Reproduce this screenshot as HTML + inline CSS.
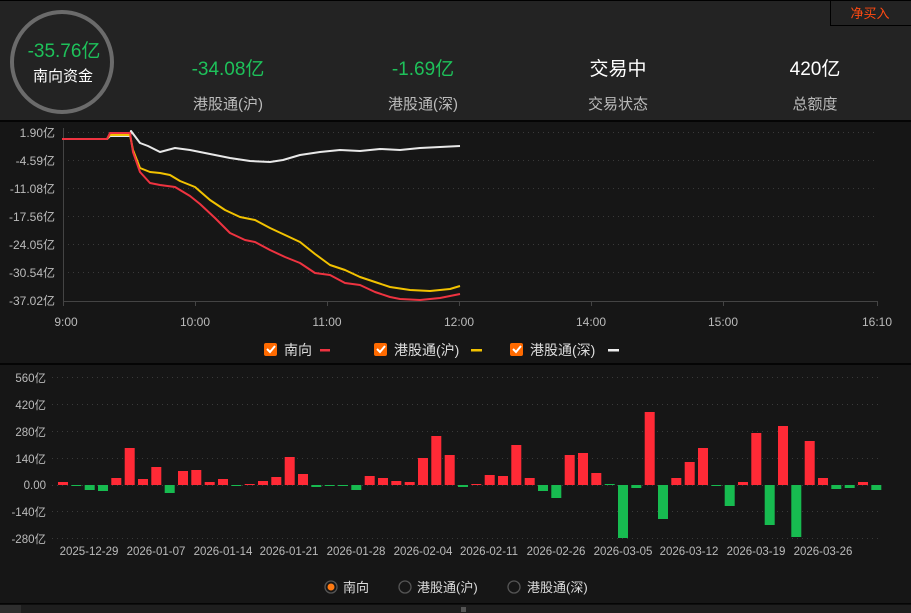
<!DOCTYPE html>
<html><head><meta charset="utf-8"><style>
html,body{margin:0;padding:0;background:#161616;}
svg{display:block;font-family:"Liberation Sans","Noto Sans CJK SC",sans-serif;}
</style></head><body>
<svg width="911" height="613" viewBox="0 0 911 613" xmlns="http://www.w3.org/2000/svg">
<rect x="0" y="0" width="911" height="613" fill="#161616"/>
<rect x="0" y="0" width="911" height="121" fill="#232323"/>
<rect x="0" y="0" width="911" height="1" fill="#000"/>
<rect x="0" y="120" width="911" height="2" fill="#050505"/>
<rect x="830.5" y="0.5" width="81" height="25" fill="#232323" stroke="#000"/>
<text x="870" y="18" fill="#ff4a12" font-size="13" text-anchor="middle">净买入</text>
<circle cx="62" cy="62" r="50" fill="none" stroke="#6b6b6b" stroke-width="4"/>
<text x="64" y="57" fill="#1ec15a" font-size="19" text-anchor="middle">-35.76亿</text>
<text x="63" y="81" fill="#fff" font-size="15" text-anchor="middle">南向资金</text>
<g text-anchor="middle">
<text x="228" y="75" fill="#1ec15a" font-size="19">-34.08亿</text>
<text x="228" y="109" fill="#bbb" font-size="15">港股通(沪)</text>
<text x="423" y="75" fill="#1ec15a" font-size="19">-1.69亿</text>
<text x="423" y="109" fill="#bbb" font-size="15">港股通(深)</text>
<text x="618" y="75" fill="#fff" font-size="19">交易中</text>
<text x="618" y="109" fill="#bbb" font-size="15">交易状态</text>
<text x="815" y="75" fill="#fff" font-size="19">420亿</text>
<text x="815" y="109" fill="#bbb" font-size="15">总额度</text>
</g>
<g stroke="#3a3a3a" stroke-dasharray="1 4" stroke-width="1">
<line x1="63" y1="132.5" x2="878" y2="132.5"/><line x1="63" y1="160.5" x2="878" y2="160.5"/>
<line x1="63" y1="188.5" x2="878" y2="188.5"/><line x1="63" y1="216.5" x2="878" y2="216.5"/>
<line x1="63" y1="244.5" x2="878" y2="244.5"/><line x1="63" y1="272.5" x2="878" y2="272.5"/>
</g>
<g stroke="#444" stroke-width="1">
<line x1="63.5" y1="128" x2="63.5" y2="301"/><line x1="63" y1="301.5" x2="878" y2="301.5"/>
<line x1="63.5" y1="301" x2="63.5" y2="306"/><line x1="195.5" y1="301" x2="195.5" y2="306"/>
<line x1="327.5" y1="301" x2="327.5" y2="306"/><line x1="459.5" y1="301" x2="459.5" y2="306"/>
<line x1="591.5" y1="301" x2="591.5" y2="306"/><line x1="723.5" y1="301" x2="723.5" y2="306"/>
<line x1="877.5" y1="301" x2="877.5" y2="306"/>
</g>
<g fill="#bbb" font-size="12" text-anchor="end">
<text x="55" y="137">1.90亿</text><text x="55" y="165">-4.59亿</text><text x="55" y="193">-11.08亿</text>
<text x="55" y="221">-17.56亿</text><text x="55" y="249">-24.05亿</text><text x="55" y="277">-30.54亿</text><text x="55" y="305">-37.02亿</text>
</g>
<g fill="#bbb" font-size="12" text-anchor="middle">
<text x="66" y="326">9:00</text><text x="195" y="326">10:00</text><text x="327" y="326">11:00</text>
<text x="459" y="326">12:00</text><text x="591" y="326">14:00</text><text x="723" y="326">15:00</text><text x="877" y="326">16:10</text>
</g>
<g fill="none" stroke-width="2" stroke-linejoin="round">
<polyline stroke="#e8e8e8" points="62,139 107,139 110,136 130,136 131,131 140,143 148,146 160,152 175,148 190,150 210,154 230,158 250,161 270,162 283,160 300,155 320,152 340,150 360,151 380,149 400,150 420,148 440,147 460,146"/>
<polyline stroke="#f2c200" points="62,139 107,139 110,135 130,135 133,150 140,168 150,172 160,173 170,175 180,181 195,187 210,200 225,210 240,217 255,220 270,228 285,235 300,242 315,254 330,265 345,270 360,277 375,282 390,287 410,290 430,291 450,289 460,286"/>
<polyline stroke="#ee3340" points="62,139 107,139 110,133 130,133 133,152 140,172 150,183 160,185 175,187 190,196 200,204 215,218 230,233 245,240 255,242 270,250 285,257 300,263 315,273 330,275 345,283 360,285 375,292 390,297 400,299 420,300 440,298 460,294"/>
</g>
<g font-size="14" fill="#ddd">
<rect x="264" y="343" width="13" height="13" rx="2" fill="#ff6a00"/><path d="M267,349 l3,3 l5,-6" stroke="#fff" stroke-width="2" fill="none"/>
<text x="284" y="355">南向</text><rect x="320" y="349" width="10" height="2.5" fill="#ee3340"/>
<rect x="374" y="343" width="13" height="13" rx="2" fill="#ff6a00"/><path d="M377,349 l3,3 l5,-6" stroke="#fff" stroke-width="2" fill="none"/>
<text x="394" y="355">港股通(沪)</text><rect x="471" y="349" width="11" height="2.5" fill="#f2c200"/>
<rect x="510" y="343" width="13" height="13" rx="2" fill="#ff6a00"/><path d="M513,349 l3,3 l5,-6" stroke="#fff" stroke-width="2" fill="none"/>
<text x="530" y="355">港股通(深)</text><rect x="608" y="349" width="11" height="2.5" fill="#eee"/>
</g>
<rect x="0" y="363" width="911" height="2" fill="#050505"/>
<g stroke="#3a3a3a" stroke-dasharray="1 4" stroke-width="1">
<line x1="52" y1="377.5" x2="880" y2="377.5"/><line x1="52" y1="404.5" x2="880" y2="404.5"/>
<line x1="52" y1="431.5" x2="880" y2="431.5"/><line x1="52" y1="458.5" x2="880" y2="458.5"/>
<line x1="52" y1="485.5" x2="880" y2="485.5"/><line x1="52" y1="511.5" x2="880" y2="511.5"/>
<line x1="52" y1="538.5" x2="880" y2="538.5"/>
</g>
<g fill="#bbb" font-size="11.5" text-anchor="end">
<text x="46" y="382">560亿</text><text x="46" y="409">420亿</text><text x="46" y="436">280亿</text>
<text x="46" y="463">140亿</text><text x="46" y="489">0.00</text><text x="46" y="516">-140亿</text><text x="46" y="543">-280亿</text>
</g>
<g fill="#ff2a36">
<rect x="58" y="482" width="10" height="3"/><rect x="111.3" y="478" width="10" height="7"/><rect x="124.7" y="448" width="10" height="37"/>
<rect x="138" y="479" width="10" height="6"/><rect x="151.3" y="467" width="10" height="18"/><rect x="178" y="471" width="10" height="14"/>
<rect x="191.3" y="470" width="10" height="15"/><rect x="204.7" y="482" width="10" height="3"/><rect x="218" y="479" width="10" height="6"/>
<rect x="244.7" y="484" width="10" height="1"/><rect x="258" y="481" width="10" height="4"/><rect x="271.3" y="477" width="10" height="8"/>
<rect x="284.7" y="457" width="10" height="28"/><rect x="298" y="474" width="10" height="11"/><rect x="364.7" y="476" width="10" height="9"/>
<rect x="378" y="478" width="10" height="7"/><rect x="391.3" y="481" width="10" height="4"/><rect x="404.7" y="482" width="10" height="3"/>
<rect x="418" y="458" width="10" height="27"/><rect x="431.3" y="436" width="10" height="49"/><rect x="444.7" y="455" width="10" height="30"/>
<rect x="471.3" y="484" width="10" height="1"/><rect x="484.7" y="475" width="10" height="10"/><rect x="498" y="476" width="10" height="9"/>
<rect x="511.3" y="445" width="10" height="40"/><rect x="524.7" y="478" width="10" height="7"/><rect x="564.7" y="455" width="10" height="30"/>
<rect x="578" y="453" width="10" height="32"/><rect x="591.3" y="473" width="10" height="12"/><rect x="644.7" y="412" width="10" height="73"/>
<rect x="671.3" y="478" width="10" height="7"/><rect x="684.7" y="462" width="10" height="23"/><rect x="698" y="448" width="10" height="37"/>
<rect x="738" y="482" width="10" height="3"/><rect x="751.3" y="433" width="10" height="52"/><rect x="778" y="426" width="10" height="59"/>
<rect x="804.7" y="441" width="10" height="44"/><rect x="818" y="478" width="10" height="7"/><rect x="858" y="482" width="10" height="3"/>
</g>
<g fill="#17bb50">
<rect x="71.3" y="485" width="10" height="1"/><rect x="84.7" y="485" width="10" height="5"/><rect x="98" y="485" width="10" height="6"/>
<rect x="164.7" y="485" width="10" height="8"/><rect x="231.3" y="485" width="10" height="1"/><rect x="311.3" y="485" width="10" height="2"/>
<rect x="324.7" y="485" width="10" height="1"/><rect x="338" y="485" width="10" height="1"/><rect x="351.3" y="485" width="10" height="5"/>
<rect x="458" y="485" width="10" height="2"/><rect x="538" y="485" width="10" height="6"/><rect x="551.3" y="485" width="10" height="13"/>
<rect x="604.7" y="484" width="10" height="1"/><rect x="618" y="485" width="10" height="53"/><rect x="631.3" y="485" width="10" height="3"/>
<rect x="658" y="485" width="10" height="34"/><rect x="711.3" y="485" width="10" height="1"/><rect x="724.7" y="485" width="10" height="21"/>
<rect x="764.7" y="485" width="10" height="40"/><rect x="791.3" y="485" width="10" height="52"/><rect x="831.3" y="485" width="10" height="4"/>
<rect x="844.7" y="485" width="10" height="3"/><rect x="871.3" y="485" width="10" height="5"/>
</g>
<g fill="#bbb" font-size="11.5" text-anchor="middle">
<text x="89" y="555">2025-12-29</text><text x="156" y="555">2026-01-07</text><text x="223" y="555">2026-01-14</text>
<text x="289" y="555">2026-01-21</text><text x="356" y="555">2026-01-28</text><text x="423" y="555">2026-02-04</text>
<text x="489" y="555">2026-02-11</text><text x="556" y="555">2026-02-26</text><text x="623" y="555">2026-03-05</text>
<text x="689" y="555">2026-03-12</text><text x="756" y="555">2026-03-19</text><text x="823" y="555">2026-03-26</text>
</g>
<g font-size="13" fill="#ddd">
<circle cx="331" cy="587" r="6" fill="none" stroke="#555" stroke-width="1.3"/><circle cx="331" cy="587" r="3.5" fill="#ff7a12"/>
<text x="343" y="592">南向</text>
<circle cx="405" cy="587" r="6" fill="none" stroke="#555" stroke-width="1.3"/><text x="417" y="592">港股通(沪)</text>
<circle cx="514" cy="587" r="6" fill="none" stroke="#555" stroke-width="1.3"/><text x="527" y="592">港股通(深)</text>
</g>
<rect x="0" y="603" width="911" height="1.5" fill="#050505"/>
<rect x="0" y="605" width="911" height="8" fill="#1e1e1e"/>
<rect x="0" y="605" width="21" height="8" fill="#2e2e2e"/>
<rect x="461" y="607" width="5" height="5" fill="#555"/>
</svg>
</body></html>
